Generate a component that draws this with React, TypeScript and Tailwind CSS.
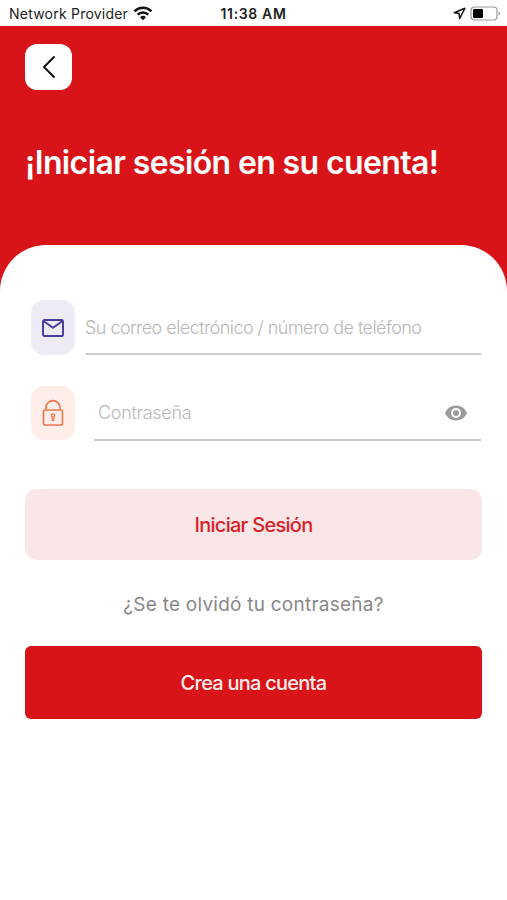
function StatusBar() {
  return (
    <div className="grid h-[26px] grid-cols-[1fr_auto_1fr] items-center bg-white pt-px text-[#222]">
      <div className="flex items-center gap-[5px] pl-[9px]">
        <span className="text-[14px] tracking-[0.22px] whitespace-nowrap">Network Provider</span>
        <svg width="20" height="15" viewBox="0 0 20 15" fill="none" stroke="#111" strokeWidth="2.5">
          <path d="M1.5 5.3a12.2 12.2 0 0 1 17 0" />
          <path d="M4.7 8.7a7.6 7.6 0 0 1 10.6 0" />
          <path d="M10 14.2 7 11.2a4.3 4.3 0 0 1 6 0z" fill="#111" stroke="none" />
        </svg>
      </div>
      <span className="text-[14px] font-semibold tracking-[0.65px]">11:38 AM</span>
      <div className="flex items-center justify-end gap-[4px] pr-[5px]">
        <svg width="13" height="13" viewBox="0 0 13 13" fill="none" stroke="#111" strokeWidth="1.5" strokeLinejoin="round">
          <path d="M11.8 1.3 1.3 5.7l4.8.9.6 4.9z" />
        </svg>
        <svg width="32" height="15" viewBox="0 0 32 15">
          <rect x="1" y="1" width="26" height="13" rx="3.5" fill="none" stroke="#999" strokeWidth="1.2" />
          <rect x="3" y="3" width="10" height="9" rx="1.3" fill="#000" />
          <path d="M28.5 5.3c2 .8 2 3.600 0 4.400z" fill="#999" />
        </svg>
      </div>
    </div>
  );
}

function MailIcon() {
  return (
    <svg width="22" height="18" viewBox="0 0 22 18" fill="none" stroke="#473ca0" strokeWidth="1.9" strokeLinejoin="round">
      <rect x="1" y="1" width="20" height="16" rx="1.6" />
      <path d="M1.5 2 11 8.800l9.500-6.800" />
    </svg>
  );
}

function LockIcon() {
  return (
    <svg width="22" height="28" viewBox="0 0 22 28" fill="none" stroke="#ee7750" strokeWidth="1.6">
      <rect x="1.5" y="11" width="19" height="15" rx="1.8" />
      <path d="M4 10.800V8.600a7 7 0 0 1 14 0v2.200" />
      <circle cx="11" cy="16.500" r="1.700" strokeWidth="1.300" />
      <path d="M10.200 18.200v3.300h1.600v-3.300" strokeWidth="1.200" />
    </svg>
  );
}

function EyeIcon() {
  return (
    <svg width="22" height="16" viewBox="0 0 22 16">
      <path
        fill="#9b9b9b"
        fillRule="evenodd"
        d="M11 .5C6 .5 1.7 3.600 0 8c1.700 4.400 6 7.500 11 7.500S20.300 12.400 22 8C20.300 3.600 16 .5 11 .5zM11 13a5 5 0 1 1 0-10 5 5 0 0 1 0 10zm0-8a3 3 0 1 0 0 6 3 3 0 0 0 0-6z"
      />
    </svg>
  );
}

export default function App() {
  return (
    <div className="min-h-[900px] w-full bg-white font-['Inter','Liberation_Sans',sans-serif]">
      <StatusBar />
      <main className="bg-[#d91418]">
        <header className="h-[219px] px-[25px] pt-[18px]">
          <button type="button" aria-label="Volver" className="flex h-[46px] w-[47px] items-center justify-center rounded-[12px] bg-white">
            <svg width="14" height="24" viewBox="0 0 14 24" fill="none" stroke="#111" strokeWidth="2">
              <path d="M12.500 1.500 2 12l10.500 10.500" />
            </svg>
          </button>
          <h1 className="mt-[53px] text-[32px] leading-10 font-semibold tracking-[-0.62px] whitespace-nowrap text-white">
            ¡Iniciar sesión en su cuenta!
          </h1>
        </header>

        <form className="h-[655px] rounded-t-[46px] bg-white px-[25px] pt-[55px]">
          <div className="flex h-[55px] pl-[6px]">
            <div className="flex h-[55px] w-[44px] shrink-0 items-center justify-center rounded-[13px] bg-[#eeebf7]">
              <MailIcon />
            </div>
            <div className="ml-[11px] h-[55px] w-[395px] border-b-2 border-[#cbcbcb]">
              <input
                type="text"
                placeholder="Su correo electrónico / número de teléfono"
                className="-ml-px h-[53px] w-full pt-[2px] text-[18px] font-light tracking-[-0.55px] outline-none placeholder:text-[#b7b7b7]"
              />
            </div>
          </div>

          <div className="mt-[31px] flex h-[54px] pl-[6px]">
            <div className="flex h-[54px] w-[44px] shrink-0 items-center justify-center rounded-[13px] bg-[#feede9]">
              <LockIcon />
            </div>
            <div className="ml-[19px] flex h-[55px] w-[387px] items-center border-b-2 border-[#cbcbcb] pr-[14px] pl-[4px]">
              <input
                type="password"
                placeholder="Contraseña"
                className="h-[53px] min-w-0 flex-1 text-[18px] font-light tracking-[-0.3px] outline-none placeholder:text-[#b7b7b7]"
              />
              <EyeIcon />
            </div>
          </div>

          <button type="submit" className="mt-[49px] block h-[71px] w-full rounded-[12px] bg-[#fbe6e7] pt-px text-[20px] font-medium tracking-[-0.72px] text-[#d91f29]">
            Iniciar Sesión
          </button>
          <a href="#" className="mt-[30px] block h-[30px] text-center text-[19px] leading-[30px] tracking-[0.24px] text-[#888]">
            ¿Se te olvidó tu contraseña?
          </a>
          <button type="button" className="mt-[26px] block h-[73px] w-full rounded-[6px] bg-[#d91418] pt-px text-[20px] font-medium tracking-[-0.75px] text-[#ffeceb]">
            Crea una cuenta
          </button>
        </form>
      </main>
    </div>
  );
}
